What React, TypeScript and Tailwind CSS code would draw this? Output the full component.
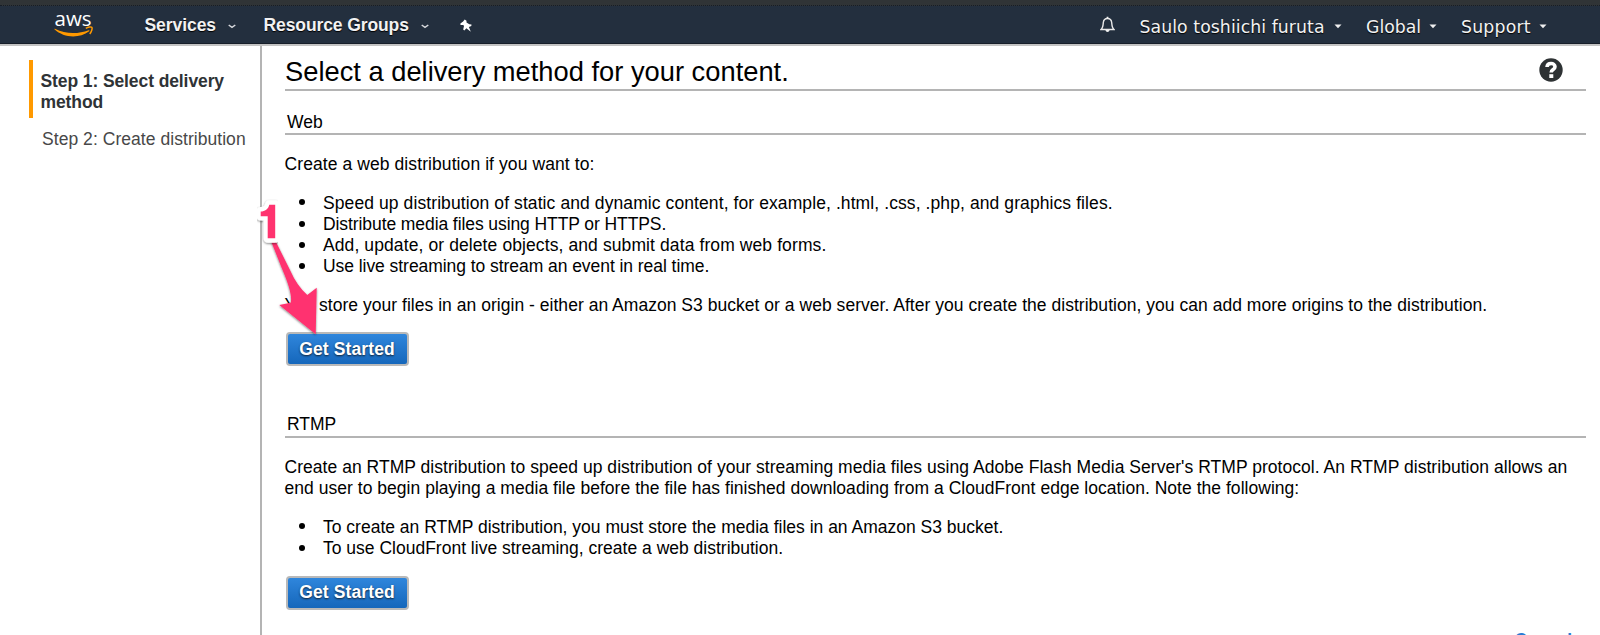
import type { ReactNode } from "react";

function Caret({ small = false }: { small?: boolean }) {
  return small ? (
    <svg width="8" height="5" viewBox="0 0 8 5" className="mb-[2px] shrink-0">
      <path d="M0.5 0.5h7L4 4.200z" fill="#f0f0f0" />
    </svg>
  ) : (
    <svg width="8" height="5" viewBox="0 0 8 5" className="mt-[3px] shrink-0">
      <path d="M0.7 1 4 3.4 7.3 1" fill="none" stroke="#d8dade" strokeWidth="1.5" />
    </svg>
  );
}

function AwsLogo() {
  return (
    <div className="relative h-[28px] w-[40px] shrink-0">
      <span className="absolute left-[0.5px] top-[-5px] font-['Open_Sans',sans-serif] text-[20.500px] leading-[22px] font-medium text-white [text-shadow:none]">
        aws
      </span>
      <svg className="absolute left-0 top-[14px]" width="40" height="12" viewBox="0 0 40 12">
        <path d="M0.4 3.2C0.2 2.900 0.600 2.500 1 2.800C12 8.500 24.500 8 34.600 4.200C35.300 3.900 35.900 4.600 35.200 5.200C25 12.800 10 12 0.400 3.200Z" fill="#f90" />
        <path d="M31.800 2.300C34 1 37.500 0.700 38 1.500C38.500 2.400 37.400 6.200 35.700 7.900" fill="none" stroke="#f90" strokeWidth="1.5" />
      </svg>
    </div>
  );
}

function Header() {
  return (
    <header className="flex h-[46px] shrink-0 flex-col border-b-2 border-[#c3c3c3] bg-[#232f3e] text-[#f2f2f2]">
      <div className="h-[6px] shrink-0 border-b border-dotted border-[#161d26] bg-[#303436]" />
      <div className="flex h-[38px] items-start border-b border-[#161e29] pl-[54px] pr-[53px] [text-shadow:0_1px_1px_#000]">
        <div className="mt-[6px]">
          <AwsLogo />
        </div>
        <div className="ml-[50.500px] flex h-[38px] w-[91px] items-center justify-between text-[17.5px] font-bold">
          <span className="tracking-[-0.06px]">Services</span>
          <Caret />
        </div>
        <div className="ml-[28px] flex h-[38px] w-[165px] items-center justify-between text-[17.5px] font-bold">
          <span className="whitespace-nowrap tracking-[-0.1px]">Resource Groups</span>
          <Caret />
        </div>
        <svg className="ml-[31px] mt-[13px]" width="12" height="14" viewBox="0 0 12 14">
          <path d="M4.700 0.400 6.500 1.800 6.500 3.500 9.300 5.200 11.500 5.500 11.300 6.900 8.900 8 10.800 12.800 6.400 9.300 4.300 11.400 3.200 10.600 4 7.100 3.300 5.900 0.500 5.900 0.400 4.600 3.100 2.500Z" fill="#fff" />
        </svg>
        <div className="ml-auto flex h-[38px] items-center pt-[5px] font-[Verdana,'DejaVu_Sans',sans-serif] text-[17.300px]">
          <svg className="mb-[6px] mr-[25px]" width="15" height="17" viewBox="0 0 15 17">
            <path d="M1 13.500C3 12 3 10.500 3.300 6.500C3.600 3.800 5.200 2.500 7.500 2.500C9.800 2.500 11.400 3.800 11.700 6.500C12 10.500 12 12 14 13.500Z" fill="none" stroke="#e8e8e8" strokeWidth="1.4" />
            <path d="M6.600 0.800h1.800v2H6.600zM5.500 14h4c0 2.500-4 2.500-4 0z" fill="#f0f0f0" />
          </svg>
          <div className="flex w-[202.500px] items-center justify-between">
            <span className="whitespace-nowrap tracking-[0.07px]">Saulo toshiichi furuta</span>
            <Caret small />
          </div>
          <div className="ml-[24px] flex w-[71px] items-center justify-between">
            <span>Global</span>
            <Caret small />
          </div>
          <div className="ml-[24px] flex w-[86px] items-center justify-between">
            <span className="tracking-[0.2px]">Support</span>
            <Caret small />
          </div>
        </div>
      </div>
    </header>
  );
}

function Sidebar() {
  return (
    <aside className="w-[262px] shrink-0 border-r-2 border-[#b4b4b4] pl-[29px] pt-[14px] text-[17.500px] leading-[21.3px]">
      <div className="h-[58px] whitespace-nowrap border-l-4 border-[#f90] pl-[7.500px] pt-[11px] font-bold tracking-[-0.1px] text-[#2f3336]">
        Step 1: Select delivery
        <br />
        method
      </div>
      <div className="ml-[13px] mt-[11px] whitespace-nowrap tracking-[0.05px] text-[#484848]">Step 2: Create distribution</div>
    </aside>
  );
}

function SectionHeading({ children }: { children: ReactNode }) {
  return (
    <h2 className="ml-[0.5px] h-[23.500px] border-b-2 border-[#b4b4b4] pl-[2px] leading-[21.3px]">{children}</h2>
  );
}

function Bullets({ children }: { children: ReactNode }) {
  return <ul className="mt-[17.300px]">{children}</ul>;
}

function Bullet({ className = "", children }: { className?: string; children: ReactNode }) {
  return (
    <li className={`flex items-center whitespace-nowrap ${className}`}>
      <span className="mb-[2px] ml-[14px] mr-[18.500px] size-[6px] shrink-0 rounded-full bg-black" />
      {children}
    </li>
  );
}

function GetStarted() {
  return (
    <button className="ml-[1px] flex h-[34px] w-[123px] items-center justify-center rounded-[4px] border-2 border-[#b9b9b9] bg-linear-to-b from-[#2f86dc] to-[#1567bb] text-[17.500px] font-bold tracking-[0.12px] text-white [text-shadow:0_1px_2px_#123]">
      Get Started
    </button>
  );
}

function Annotation() {
  return (
    <svg className="absolute left-[252px] top-[198px]" width="74" height="140" viewBox="0 0 74 140">
      <defs>
        <filter id="shadow" x="-20%" y="-20%" width="140%" height="140%">
          <feDropShadow dx="0" dy="1" stdDeviation="1.200" floodOpacity="0.5" />
        </filter>
      </defs>
      <path d="M19 43H23.500L38 72Q45 88 55.300 97L64.700 89.700 63.700 136.300 27.300 107 38.700 104.700Q41 96 29.700 70Z" fill="#ff336f" filter="url(#shadow)" />
      <path d="M17.500 6.700H23V40.300H16V18H8.700V13.500C13 13.500 16.500 11 17.500 6.700Z" fill="#fff" stroke="#fff" strokeWidth="9" strokeLinejoin="round" filter="url(#shadow)" />
      <path d="M17.300 6.700H23.200V40.300H15.700V18.200H8.700V13.500C13 13.500 16.300 11 17.300 6.700Z" fill="#ff336f" />
    </svg>
  );
}

export default function App() {
  return (
    <div className="relative flex h-[635px] w-[1600px] flex-col overflow-hidden bg-white font-['Liberation_Sans',Arial,sans-serif] text-black">
      <Header />
      <div className="flex min-h-0 flex-1">
        <Sidebar />
        <main className="flex min-w-0 flex-1 flex-col pl-[22.500px] pr-[14px] text-[17.500px] leading-[21.3px]">
          <div className="ml-[0.5px] flex h-[45px] shrink-0 justify-between border-b-2 border-[#b4b4b4]">
            <h1 className="pt-[10px] text-[27.300px] leading-[32px]">Select a delivery method for your content.</h1>
            <svg className="mr-[23px] mt-[12px]" width="24" height="24" viewBox="0 0 24 24">
              <circle cx="12" cy="12" r="11.700" fill="#2e3234" />
              <path d="M8 9C8.300 4.300 16 4.600 16 8.700C16 11.700 12.200 11.400 12.200 14.500" fill="none" stroke="#fff" strokeWidth="3.600" />
              <path d="M10.300 16.200h4v3.800h-4z" fill="#fff" />
            </svg>
          </div>
          <section className="mt-[20.500px] shrink-0">
            <SectionHeading>Web</SectionHeading>
            <p className="mt-[19px] tracking-[0.085px]">Create a web distribution if you want to:</p>
            <Bullets>
              <Bullet className="tracking-[0.092px]">
                Speed up distribution of static and dynamic content, for example, .html, .css, .php, and graphics files.
              </Bullet>
              <Bullet className="tracking-[-0.085px]">Distribute media files using HTTP or HTTPS.</Bullet>
              <Bullet className="tracking-[0.1px]">Add, update, or delete objects, and submit data from web forms.</Bullet>
              <Bullet className="tracking-[-0.055px]">Use live streaming to stream an event in real time.</Bullet>
            </Bullets>
            <p className="mb-[16px] mt-[17.200px] whitespace-nowrap tracking-[0.03px]">
              You store your files in an origin - either an Amazon S3 bucket or a web server. After you create the distribution, you can add more origins to the distribution.
            </p>
            <GetStarted />
          </section>
          <section className="mt-[48px] shrink-0">
            <SectionHeading>RTMP</SectionHeading>
            <p className="mt-[19px] whitespace-nowrap tracking-[0.038px]">
              Create an RTMP distribution to speed up distribution of your streaming media files using Adobe Flash Media Server's RTMP protocol. An RTMP distribution allows an
              <br />
              <span className="tracking-[0.03px]">end user to begin playing a media file before the file has finished downloading from a CloudFront edge location. Note the following:</span>
            </p>
            <Bullets>
              <Bullet>To create an RTMP distribution, you must store the media files in an Amazon S3 bucket.</Bullet>
              <Bullet>To use CloudFront live streaming, create a web distribution.</Bullet>
            </Bullets>
            <div className="mt-[16.700px]">
              <GetStarted />
            </div>
          </section>
          <a className="mr-[14px] mt-[20px] shrink-0 self-end font-bold text-[#2b7bd3]">Cancel</a>
        </main>
      </div>
      <Annotation />
    </div>
  );
}
